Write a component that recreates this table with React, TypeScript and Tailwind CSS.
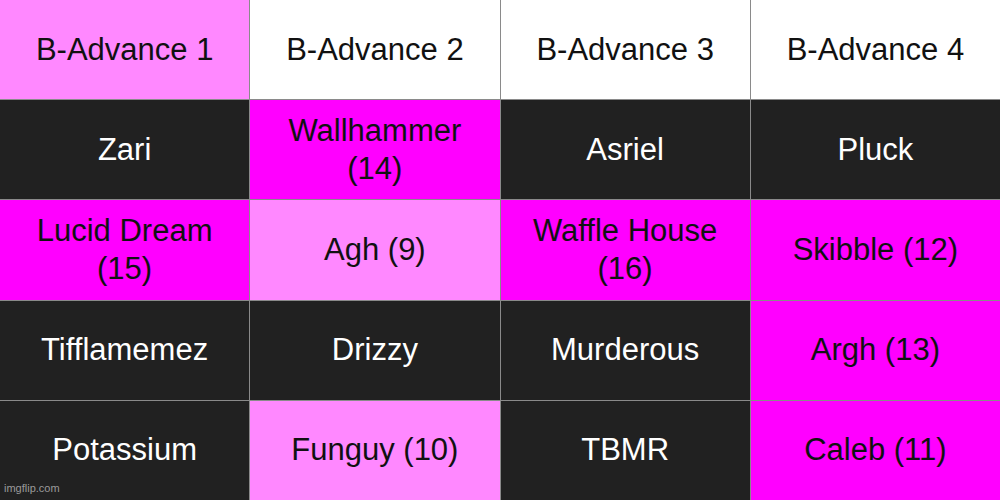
import React from 'react';

type Tone = 'light' | 'hot' | 'dark' | 'white';

const tones: Record<Tone, string> = {
  light: 'bg-[#ff88ff] text-[#111111]',
  hot: 'bg-[#ff00ff] text-[#111111]',
  dark: 'bg-[#212121] text-white',
  white: 'bg-white text-[#111111]',
};

const cells: [string, Tone][] = [
  ['B-Advance 1', 'light'],
  ['B-Advance 2', 'white'],
  ['B-Advance 3', 'white'],
  ['B-Advance 4', 'white'],
  ['Zari', 'dark'],
  ['Wallhammer (14)', 'hot'],
  ['Asriel', 'dark'],
  ['Pluck', 'dark'],
  ['Lucid Dream (15)', 'hot'],
  ['Agh (9)', 'light'],
  ['Waffle House (16)', 'hot'],
  ['Skibble (12)', 'hot'],
  ['Tifflamemez', 'dark'],
  ['Drizzy', 'dark'],
  ['Murderous', 'dark'],
  ['Argh (13)', 'hot'],
  ['Potassium', 'dark'],
  ['Funguy (10)', 'light'],
  ['TBMR', 'dark'],
  ['Caleb (11)', 'hot'],
];

export default function App() {
  return (
    <div className="relative w-[1000px] h-[500px] overflow-hidden font-['Liberation_Sans',Arial,sans-serif]">
      <div className="grid grid-cols-4 grid-rows-5 gap-px w-full h-full bg-[#8a8a8a]">
        {cells.map(([label, tone], i) => (
          <div
            key={i}
            className={`flex items-center justify-center text-center px-6 text-[31px] leading-[38px] ${tones[tone]}`}
          >
            {label}
          </div>
        ))}
      </div>
      <div className="absolute left-[4px] bottom-[4px] text-[11px] text-[#9a9a9a]">imgflip.com</div>
    </div>
  );
}
